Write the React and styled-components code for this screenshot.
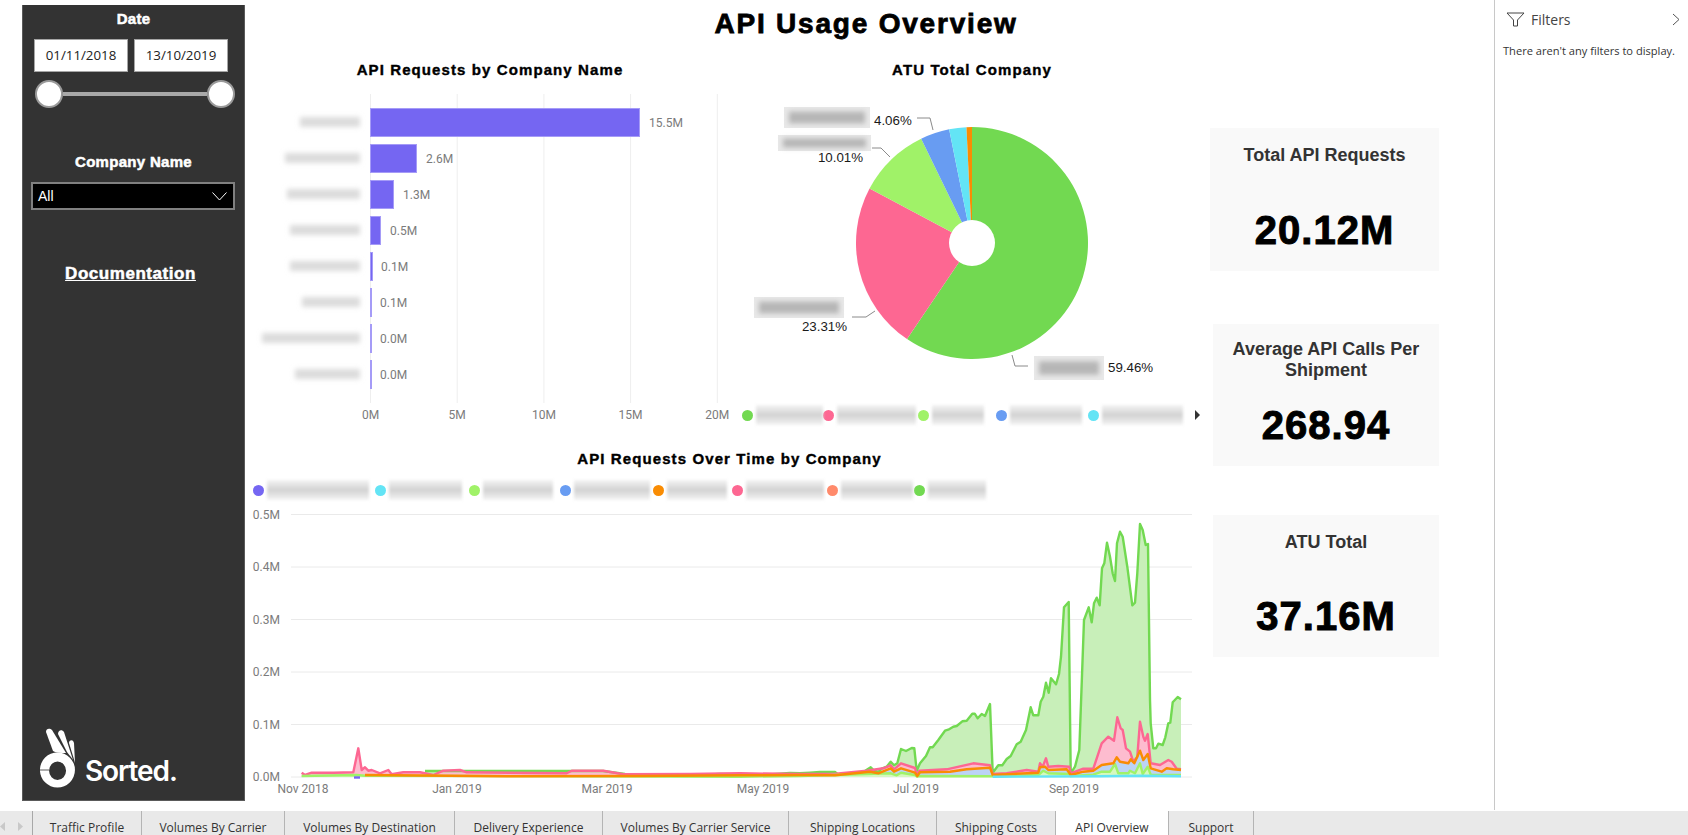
import styled, { createGlobalStyle } from "styled-components";

const GlobalStyle = createGlobalStyle`
	html, body {
		margin: 0;
		padding: 0;
		background: #fff;
		overflow: hidden;
	}
	* {
		box-sizing: border-box;
	}
`;

const HEAD_FONT = `"Liberation Sans", Arial, sans-serif`;
const UI_FONT = `"Open Sans", "Noto Sans", sans-serif`;
const CHART_FONT = `Roboto, "Noto Sans", sans-serif`;

const COLORS = {
	purple: "#7566f2",
	cyan: "#63e4f5",
	lime: "#a0f268",
	blue: "#689cf2",
	orange: "#f98c03",
	pink: "#fd6792",
	coral: "#ff8a6b",
	green: "#72d951",
};

const BARS = [
	{ value: "15.5M", width: 269 },
	{ value: "2.6M", width: 46 },
	{ value: "1.3M", width: 23 },
	{ value: "0.5M", width: 10 },
	{ value: "0.1M", width: 2 },
	{ value: "0.1M", width: 1 },
	{ value: "0.0M", width: 1 },
	{ value: "0.0M", width: 1 },
];
const BAR_LABEL_START = [300, 285, 287, 290, 290, 302, 262, 295];

const SLICES = [
	{ share: 59.46, color: COLORS.green },
	{ share: 23.31, color: COLORS.pink },
	{ share: 10.01, color: COLORS.lime },
	{ share: 4.06, color: COLORS.blue },
	{ share: 2.4, color: COLORS.cyan },
	{ share: 0.76, color: COLORS.orange },
];

const TABS = [
	{ label: "Traffic Profile", width: 109 },
	{ label: "Volumes By Carrier", width: 143 },
	{ label: "Volumes By Destination", width: 170 },
	{ label: "Delivery Experience", width: 148 },
	{ label: "Volumes By Carrier Service", width: 186 },
	{ label: "Shipping Locations", width: 148 },
	{ label: "Shipping Costs", width: 119 },
	{ label: "API Overview", width: 113, active: true },
	{ label: "Support", width: 85 },
];

// points read off the reference, in the coordinates of two crops
const fromLeft = (pts) => pts.map(([x, y]) => [240 + x / 3, 440 + y / 3]);
const fromRight = (pts) => pts.map(([x, y]) => [800 + x / 3, 500 + y / 3]);

const GREEN_LINE = [
	[425, 771], [603, 771], [625, 774], [700, 775], [720, 774], [760, 775], [790, 773],
	...fromRight([
		[0, 820], [30, 818], [60, 816], [105, 816], [115, 824], [150, 820], [190, 816], [212, 802],
		[222, 812], [235, 816], [245, 806], [260, 800], [272, 785], [282, 796], [292, 790], [303, 747],
		[318, 753], [335, 744], [343, 745], [350, 812], [360, 790], [378, 768], [390, 742], [398, 742],
		[415, 720], [435, 692], [445, 689], [460, 680], [470, 678], [487, 664], [500, 662], [517, 641],
		[524, 641], [533, 655], [545, 642], [555, 648], [570, 612], [578, 818], [595, 796], [607, 796],
		[620, 777], [632, 768], [650, 733], [662, 725], [678, 690], [692, 622], [700, 646], [715, 646],
		[722, 605], [730, 590], [738, 548], [746, 578], [753, 535], [768, 553], [777, 522], [783, 470],
		[792, 322], [806, 306], [812, 820], [825, 800], [838, 750], [852, 360], [866, 322], [875, 367],
		[882, 310], [890, 293], [899, 316], [906, 205], [913, 190], [921, 128], [930, 170], [938, 220],
		[945, 243], [951, 130], [960, 95], [968, 110], [982, 200], [997, 316], [1005, 308], [1012, 220],
		[1020, 72], [1028, 90], [1037, 135], [1044, 132], [1050, 600], [1052, 670], [1060, 745], [1068, 745],
		[1075, 731], [1088, 735], [1096, 712], [1105, 670], [1111, 668], [1118, 607], [1133, 591], [1143, 598],
	]),
];

const PINK_LINE = [
	...fromLeft([
		[185, 998], [195, 1005], [215, 998], [280, 998], [340, 997], [355, 925], [365, 990], [375, 982],
		[385, 992], [395, 990], [420, 1000], [445, 990], [455, 1003], [490, 997], [540, 997], [580, 1005],
		[610, 992], [660, 990], [680, 997], [980, 1000], [995, 992], [1090, 992], [1150, 1003], [1350, 1002],
		[1500, 1000],
	]),
	...fromRight([
		[0, 822], [100, 822], [200, 812], [250, 805], [272, 796], [282, 808], [303, 790], [345, 804],
		[350, 825], [358, 812], [440, 808], [520, 790], [570, 796], [578, 822], [620, 820], [680, 810],
		[715, 815], [720, 790], [728, 800], [738, 775], [745, 800], [775, 798], [808, 800], [812, 820],
		[850, 806], [880, 806], [905, 730], [925, 710], [942, 722], [952, 652], [962, 685], [968, 690],
		[978, 745], [990, 755], [1000, 785], [1012, 770], [1020, 665], [1030, 710], [1035, 722], [1043, 702],
		[1052, 790], [1080, 795], [1105, 780], [1115, 785], [1130, 806], [1143, 808],
	]),
];

const ORANGE_LINE = [
	...fromLeft([[375, 1005], [800, 1009], [1200, 1008], [1500, 1006]]),
	...fromRight([
		[0, 825], [105, 826], [210, 815], [235, 820], [272, 805], [282, 815], [303, 805], [345, 818],
		[352, 828], [360, 817], [450, 815], [500, 808], [570, 803], [578, 825], [715, 818], [720, 802],
		[735, 800], [745, 810], [800, 808], [812, 825], [850, 815], [880, 812], [905, 795], [940, 790],
		[950, 772], [960, 785], [985, 790], [992, 778], [1003, 790], [1020, 752], [1030, 780], [1043, 762],
		[1052, 805], [1085, 815], [1100, 805], [1120, 808], [1143, 810],
	]),
];

const LIME_LINE = [
	...fromLeft([[185, 1008], [350, 1005], [375, 1007], [1500, 1010]]),
	...fromRight([
		[0, 828], [272, 820], [290, 826], [303, 818], [345, 825], [352, 830], [360, 828], [578, 829],
		[715, 825], [730, 812], [745, 820], [808, 822], [812, 828], [880, 824], [905, 815], [930, 815],
		[945, 792], [955, 820], [985, 820], [990, 812], [1005, 820], [1020, 790], [1028, 822], [1043, 800],
		[1052, 824], [1143, 825],
	]),
];

const CYAN_LINE = fromRight([[578, 830], [900, 829], [1020, 827], [1143, 829]]);

const BASELINE = 777;
const toLine = (pts) => pts.map(([x, y]) => `${x.toFixed(1)},${y.toFixed(1)}`).join(" ");
const toArea = (pts) =>
	`${pts[0][0]},${BASELINE} ${toLine(pts)} ${pts[pts.length - 1][0]},${BASELINE}`;

const slicePath = (cx, cy, r, from, to) => {
	const a0 = (from / 100) * Math.PI * 2;
	const a1 = (to / 100) * Math.PI * 2;
	const large = to - from > 50 ? 1 : 0;
	const p = (a) => `${cx + r * Math.sin(a)} ${cy - r * Math.cos(a)}`;
	return `M ${cx} ${cy} L ${p(a0)} A ${r} ${r} 0 ${large} 1 ${p(a1)} Z`;
};

const Redaction = ({ x, y, w, h }) => (
	<g>
		<rect x={x} y={y} width={w} height={h} fill="#e8e8e8" />
		<rect x={x + 5} y={y + h * 0.22} width={w - 10} height={h * 0.56} fill="#b6b6b6" filter="url(#pieSoft)" />
	</g>
);

const BarChart = () => (
	<ChartSvg width="475" height="335" viewBox="245 93 475 335">
		<defs>
			<filter id="barSoft" x="-20%" y="-100%" width="140%" height="300%">
				<feGaussianBlur stdDeviation="2.4" />
			</filter>
		</defs>
		{[0, 5, 10, 15, 20].map((tick, i) => {
			const x = 370.5 + i * 86.7;
			return (
				<g key={tick}>
					<line x1={x} x2={x} y1="94" y2="403" stroke="#eeeeee" />
					<AxisText x={x} y="419" textAnchor="middle">
						{tick}M
					</AxisText>
				</g>
			);
		})}
		{BARS.map((bar, i) => {
			const y = 108 + i * 36;
			return (
				<g key={i}>
					<rect x={BAR_LABEL_START[i]} y={y + 9} width={360 - BAR_LABEL_START[i]} height={10} fill="#dcdcdc" filter="url(#barSoft)" />
					<rect x="370.5" y={y + 0.5} width={bar.width} height="28" fill={bar.width > 1 ? COLORS.purple : "#a59bf7"} stroke="#a59bf7" />
					<AxisText x={370 + bar.width + (bar.width > 5 ? 10 : 9)} y={y + 19}>
						{bar.value}
					</AxisText>
				</g>
			);
		})}
	</ChartSvg>
);

const PieChart = () => {
	let start = 0;
	return (
		<ChartSvg width="486" height="312" viewBox="720 93 486 312">
			<defs>
				<filter id="pieSoft" x="-20%" y="-100%" width="140%" height="300%">
					<feGaussianBlur stdDeviation="2.6" />
				</filter>
			</defs>
			{SLICES.map((slice) => {
				const path = slicePath(972, 243, 116, start, start + slice.share);
				start += slice.share;
				return <path key={slice.color} d={path} fill={slice.color} />;
			})}
			<circle cx="972" cy="243" r="23" fill="#fff" />
			<Leader points="917,118 930,118 933,130" />
			<Leader points="872,148 881,148 890,157" />
			<Leader points="852,317 866,317 875,311" />
			<Leader points="1012,355 1015,366 1028,366" />
			<Redaction x={784} y={107} w={86} h={21} />
			<Redaction x={778} y={135} w={93} h={16} />
			<Redaction x={754} y={297} w={90} h={21} />
			<Redaction x={1034} y={356} w={70} h={24} />
			<SliceText x="874" y="125">4.06%</SliceText>
			<SliceText x="863" y="162" textAnchor="end">10.01%</SliceText>
			<SliceText x="847" y="331" textAnchor="end">23.31%</SliceText>
			<SliceText x="1108" y="372">59.46%</SliceText>
		</ChartSvg>
	);
};

const LineChart = () => (
	<ChartSvg width="961" height="301" viewBox="245 504 961 301">
		{["0.5M", "0.4M", "0.3M", "0.2M", "0.1M", "0.0M"].map((tick, i) => {
			const y = 514.5 + i * 52.5;
			return (
				<g key={tick}>
					<line x1="291" x2="1192" y1={y} y2={y} stroke="#eaeaea" strokeWidth="1" />
					<AxisText x="280" y={y + 4} textAnchor="end">
						{tick}
					</AxisText>
				</g>
			);
		})}
		{[
			["Nov 2018", 303],
			["Jan 2019", 457],
			["Mar 2019", 607],
			["May 2019", 763],
			["Jul 2019", 916],
			["Sep 2019", 1074],
		].map(([label, x]) => (
			<AxisText key={label} x={x} y="793" textAnchor="middle">
				{label}
			</AxisText>
		))}
		<polygon points={toArea(GREEN_LINE)} fill="#c8efb9" />
		<polygon points={toArea(PINK_LINE)} fill="#fdbccf" />
		<polygon points={toArea(ORANGE_LINE)} fill="#bcd3f5" />
		<polygon points={toArea(LIME_LINE)} fill="#d6f8bf" />
		<Series points={toLine(GREEN_LINE)} stroke={COLORS.green} />
		<Series points={toLine(PINK_LINE)} stroke={COLORS.pink} />
		<Series points={toLine(LIME_LINE)} stroke={COLORS.lime} />
		<Series points={toLine(ORANGE_LINE)} stroke={COLORS.orange} />
		<Series points={toLine(CYAN_LINE)} stroke={COLORS.cyan} />
		<Series points="354,777.5 360,777.5" stroke={COLORS.purple} />
	</ChartSvg>
);

const Legend = ({ items, start, arrow }) => (
	<LegendRow $start={start}>
		{items.map(([color, step, patch]) => (
			<LegendItem key={color} $step={step}>
				<LegendDot $color={color} />
				<LegendPatch $width={patch} />
			</LegendItem>
		))}
		{arrow && <LegendArrow />}
	</LegendRow>
);

const App = () => (
	<Page>
		<GlobalStyle />
		<Workspace>
			<Report>
				<Sidebar>
					<SlicerTitle>Date</SlicerTitle>
					<DateRow>
						<DateBox>01/11/2018</DateBox>
						<DateBox>13/10/2019</DateBox>
					</DateRow>
					<Slider>
						<Thumb />
						<Track />
						<Thumb />
					</Slider>
					<SlicerTitle $top={40}>Company Name</SlicerTitle>
					<Dropdown>
						<span>All</span>
						<svg width="15" height="9" viewBox="0 0 15 9">
							<path d="M0.5 0.5 L7.5 8 L14.5 0.5" fill="none" stroke="#fff" />
						</svg>
					</Dropdown>
					<DocLink>Documentation</DocLink>
					<Logo>
						<svg width="36" height="62" viewBox="0 0 36 62">
							<path d="M6 5 C6 1 10 1 12 3 L26 26 C21 26 16 26 13 24 Z" fill="#fff" />
							<path d="M18 7 C18 3 22 2 24 5 L33 33 C32 31 30 29 27 25 Z" fill="#fff" />
							<path d="M29 16 C29 13 33 12 34 16 L35 36 L33.6 31 Z" fill="#fff" />
							<path
								fillRule="evenodd"
								d="M17.5 25.5 A17.5 17.5 0 1 1 17.4 60.5 A17.5 17.5 0 1 1 17.5 25.5 Z M17.5 34.5 A8.5 9.2 0 1 0 17.6 52.9 A8.5 9.2 0 1 0 17.5 34.5 Z"
								fill="#fff"
							/>
							<path d="M0 43 H9" stroke="#333" strokeWidth="0.8" />
						</svg>
						<LogoWord>Sorted.</LogoWord>
					</Logo>
				</Sidebar>
				<Main>
					<ReportTitle>API Usage Overview</ReportTitle>
					<Columns>
						<Charts>
							<TopRow>
								<ChartSection $width={475}>
									<ChartTitle $shift={15} $height={48}>API Requests by Company Name</ChartTitle>
									<BarChart />
								</ChartSection>
								<ChartSection $width={486}>
									<ChartTitle $shift={18} $height={48}>ATU Total Company</ChartTitle>
									<PieChart />
									<Legend
										start={22}
										arrow
										items={[
											[COLORS.green, 81, 67],
											[COLORS.pink, 95, 79],
											[COLORS.lime, 78, 52],
											[COLORS.blue, 92, 72],
											[COLORS.cyan, 107, 81],
										]}
									/>
								</ChartSection>
							</TopRow>
							<ChartSection $width={961}>
								<ChartTitle $shift={8} $height={36} $top={12}>API Requests Over Time by Company</ChartTitle>
								<Legend
									start={8}
									items={[
										[COLORS.purple, 122, 102],
										[COLORS.cyan, 94, 73],
										[COLORS.lime, 91, 70],
										[COLORS.blue, 93, 76],
										[COLORS.orange, 79, 60],
										[COLORS.pink, 95, 78],
										[COLORS.coral, 87, 72],
										[COLORS.green, 72, 58],
									]}
								/>
								<LineChart />
							</ChartSection>
						</Charts>
						<KpiColumn>
							<KpiCard $left={4} $top={83} $width={229} $height={143} $pad={17}>
								<KpiTitle>Total API Requests</KpiTitle>
								<KpiValue>20.12M</KpiValue>
							</KpiCard>
							<KpiCard $left={7} $top={53} $width={226} $height={142} $pad={15}>
								<KpiTitle>Average API Calls Per Shipment</KpiTitle>
								<KpiValue>268.94</KpiValue>
							</KpiCard>
							<KpiCard $left={7} $top={49} $width={226} $height={142} $pad={17}>
								<KpiTitle>ATU Total</KpiTitle>
								<KpiValue>37.16M</KpiValue>
							</KpiCard>
						</KpiColumn>
					</Columns>
				</Main>
			</Report>
			<FilterPane>
				<FilterHeader>
					<svg width="19" height="15" viewBox="0 0 19 15">
						<path d="M1 1 H18 L11.5 8 V14 H7.5 V8 Z" fill="none" stroke="#444" />
					</svg>
					<FilterLabel>Filters</FilterLabel>
					<svg width="8" height="13" viewBox="0 0 8 13">
						<path d="M1 1 L7 6.5 L1 12" fill="none" stroke="#555" />
					</svg>
				</FilterHeader>
				<FilterNote>There aren't any filters to display.</FilterNote>
			</FilterPane>
		</Workspace>
		<TabBar>
			<TabArrows>
				<svg width="5" height="9" viewBox="0 0 5 9">
					<path d="M5 0 L0 4.5 L5 9 Z" fill="#c8c8c8" />
				</svg>
				<svg width="5" height="9" viewBox="0 0 5 9">
					<path d="M0 0 L5 4.5 L0 9 Z" fill="#c8c8c8" />
				</svg>
			</TabArrows>
			{TABS.map((tab) => (
				<Tab key={tab.label} $width={tab.width} $active={tab.active}>
					{tab.label}
				</Tab>
			))}
		</TabBar>
	</Page>
);

export default App;

const Page = styled.div`
	width: 1688px;
	height: 835px;
	display: flex;
	flex-direction: column;
	overflow: hidden;
	background: #fff;
`;
const Workspace = styled.div`
	height: 811px;
	display: flex;
`;
const Report = styled.div`
	width: 1494px;
	padding: 5px 0 0 22px;
	display: flex;
`;
const Sidebar = styled.aside`
	width: 223px;
	height: 796px;
	background: #333333;
	border: 1px solid #5a5a5a;
	border-top: 0;
	display: flex;
	flex-direction: column;
	color: #fff;
`;
const SlicerTitle = styled.div`
	height: 28px;
	line-height: 28px;
	margin-top: ${(props) => props.$top || 0}px;
	text-align: center;
	font-family: ${HEAD_FONT};
	font-size: 15px;
	font-weight: 700;
	letter-spacing: 0.3px;
	-webkit-text-stroke: 0.5px #fff;
`;
const DateRow = styled.div`
	display: flex;
	gap: 6px;
	margin: 6px 0 0 11px;
`;
const DateBox = styled.div`
	width: 94px;
	height: 33px;
	background: #fff;
	border: 1px solid #a6a6a6;
	text-align: center;
	line-height: 31px;
	font-family: ${UI_FONT};
	font-size: 13.3px;
	color: #222;
`;
const Slider = styled.div`
	width: 200px;
	height: 28px;
	margin: 8px 0 0 12px;
	display: flex;
	align-items: center;
`;
const Thumb = styled.div`
	width: 28px;
	height: 28px;
	flex: none;
	background: #fff;
	border: 2px solid #9a9a9a;
	border-radius: 50%;
`;
const Track = styled.div`
	flex: 1;
	height: 4px;
	background: #a8a8a8;
`;
const Dropdown = styled.div`
	height: 28px;
	margin: 6px 9px 0 8px;
	padding: 0 6px 0 5px;
	background: #000;
	border: 2px solid #808080;
	display: flex;
	align-items: center;
	justify-content: space-between;
	font-family: ${HEAD_FONT};
	font-size: 14px;
	color: #fff;
`;
const DocLink = styled.a`
	height: 26px;
	margin-top: 51px;
	padding-right: 6px;
	line-height: 26px;
	text-align: center;
	font-family: ${HEAD_FONT};
	font-size: 17px;
	font-weight: 700;
	letter-spacing: 0.55px;
	text-decoration: underline;
	-webkit-text-stroke: 0.5px #fff;
	color: #fff;
`;
const Logo = styled.div`
	margin-top: auto;
	margin-bottom: 11px;
	padding-left: 17px;
	display: flex;
	align-items: flex-end;
	gap: 9px;
`;
const LogoWord = styled.span`
	margin-bottom: 1px;
	font-family: Inter, sans-serif;
	font-size: 28px;
	font-weight: 600;
	line-height: 34px;
	letter-spacing: -1.1px;
	color: #fff;
`;
const Main = styled.main`
	flex: 1;
	display: flex;
	flex-direction: column;
`;
const ReportTitle = styled.h1`
	height: 40px;
	margin: 0;
	padding-right: 7px;
	line-height: 38px;
	text-align: center;
	font-family: ${HEAD_FONT};
	font-size: 28px;
	font-weight: 700;
	letter-spacing: 1.8px;
	-webkit-text-stroke: 0.8px #000;
	color: #000;
`;
const Columns = styled.div`
	display: flex;
`;
const Charts = styled.div`
	width: 961px;
	display: flex;
	flex-direction: column;
`;
const TopRow = styled.div`
	display: flex;
`;
const ChartSection = styled.section`
	width: ${(props) => props.$width}px;
	display: flex;
	flex-direction: column;
`;
const ChartTitle = styled.h2`
	height: ${(props) => props.$height}px;
	line-height: ${(props) => props.$height + 2}px;
	margin: ${(props) => props.$top || 0}px 0 0;
	padding-left: ${(props) => props.$shift}px;
	text-align: center;
	font-family: ${HEAD_FONT};
	font-size: 15px;
	font-weight: 700;
	letter-spacing: 1.1px;
	-webkit-text-stroke: 0.4px #000;
	color: #000;
`;
const ChartSvg = styled.svg`
	display: block;
	flex: none;
	overflow: visible;
`;
const AxisText = styled.text`
	font-family: ${CHART_FONT};
	font-size: 12px;
	fill: #7b7b7b;
`;
const SliceText = styled.text`
	font-family: ${HEAD_FONT};
	font-size: 13.3px;
	fill: #1a1a1a;
`;
const Leader = styled.polyline`
	fill: none;
	stroke: #8a8a8a;
	stroke-width: 1;
`;
const Series = styled.polyline`
	fill: none;
	stroke-width: 2.4;
	stroke-linejoin: round;
`;
const LegendRow = styled.div`
	height: 23px;
	padding: 0 0 3px ${(props) => props.$start}px;
	display: flex;
	align-items: center;

	&:not(:last-child) {
		height: 28px;
		padding-top: 0;
		padding-bottom: 0;
	}
`;
const LegendItem = styled.div`
	width: ${(props) => props.$step}px;
	display: flex;
	align-items: center;
	gap: 3px;
`;
const LegendDot = styled.span`
	width: 11px;
	height: 11px;
	flex: none;
	border-radius: 50%;
	background: ${(props) => props.$color};
`;
const LegendPatch = styled.span`
	width: ${(props) => props.$width}px;
	height: 20px;
	flex: none;
	background: linear-gradient(#f4f4f4, #d2d2d2 50%, #f4f4f4);
	filter: blur(1.5px);
`;
const LegendArrow = styled.span`
	width: 0;
	height: 0;
	border-left: 5px solid #333;
	border-top: 5px solid transparent;
	border-bottom: 5px solid transparent;
`;
const KpiColumn = styled.div`
	display: flex;
	flex-direction: column;
`;
const KpiCard = styled.div`
	width: ${(props) => props.$width}px;
	height: ${(props) => props.$height}px;
	margin: ${(props) => props.$top}px 0 0 ${(props) => props.$left}px;
	padding: ${(props) => props.$pad}px 4px 17px;
	background: #f9f9f9;
	display: flex;
	flex-direction: column;
	align-items: center;
	text-align: center;
`;
const KpiTitle = styled.div`
	font-family: ${HEAD_FONT};
	font-size: 18px;
	font-weight: 700;
	line-height: 21px;
	color: #333;
`;
const KpiValue = styled.div`
	margin-top: auto;
	font-family: ${HEAD_FONT};
	font-size: 40px;
	font-weight: 700;
	line-height: 48px;
	letter-spacing: 1px;
	-webkit-text-stroke: 1px #000;
	color: #000;
`;
const FilterPane = styled.aside`
	width: 194px;
	height: 810px;
	padding: 0 8px;
	border-left: 1px solid #c8c8c8;
`;
const FilterHeader = styled.div`
	height: 38px;
	padding: 0 0 0 3px;
	display: flex;
	align-items: center;
	gap: 6px;

	svg:last-child {
		margin-left: auto;
	}
`;
const FilterLabel = styled.span`
	font-family: ${UI_FONT};
	font-size: 14px;
	color: #444;
`;
const FilterNote = styled.p`
	margin: 5px 0 0;
	font-family: ${UI_FONT};
	font-size: 11.1px;
	color: #333;
`;
const TabBar = styled.nav`
	height: 24px;
	background: #e9e9e9;
	display: flex;
	overflow: hidden;
`;
const TabArrows = styled.div`
	width: 33px;
	padding: 5px 9px 0 0;
	display: flex;
	justify-content: space-between;
	align-items: flex-start;
	border-right: 1px solid #a8a8a8;
	svg {
		margin-top: 6px;
	}
`;
const Tab = styled.div`
	width: ${(props) => props.$width}px;
	padding-top: 10px;
	border-right: 1px solid #b4b4b4;
	background: ${(props) => (props.$active ? "#fff" : "transparent")};
	text-align: center;
	line-height: 14px;
	font-family: ${UI_FONT};
	font-size: 12px;
	color: #333;
	white-space: nowrap;
`;
